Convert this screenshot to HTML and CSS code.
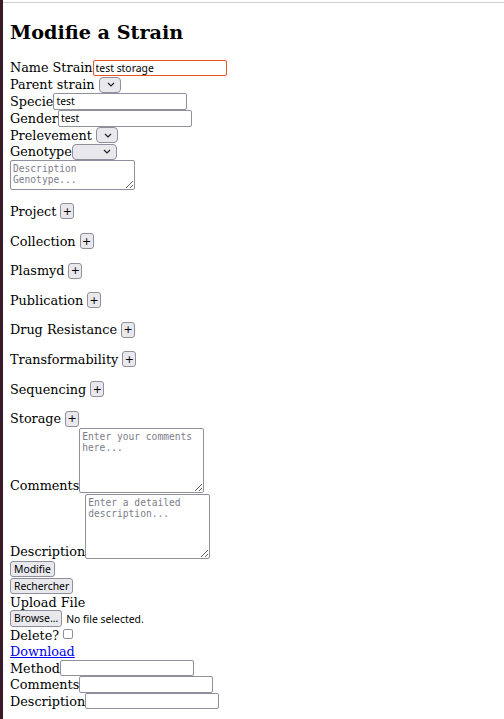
FILE: index.html
```html
<!DOCTYPE html>
<html lang="en">
<head>
<meta charset="utf-8">
<title>Modifie a Strain</title>
<link rel="stylesheet" href="styles.css">
</head>
<body>
<div class="page">
  <h2 class="title">Modifie a Strain</h2>
  <form class="strain-form">
    <div class="row"><label>Name Strain</label><input type="text" class="field is-focused" value="test storage"></div>
    <div class="row"><label>Parent strain</label><select class="select spaced"></select></div>
    <div class="row"><label>Specie</label><input type="text" class="field" value="test"></div>
    <div class="row"><label>Gender</label><input type="text" class="field" value="test"></div>
    <div class="row"><label>Prelevement</label><select class="select spaced"></select></div>
    <div class="row"><label>Genotype</label><select class="select select-wide"></select></div>
    <textarea class="area area-small" placeholder="Description Genotype..."></textarea>

    <p class="section">Project <button type="button" class="add">+</button></p>
    <p class="section">Collection <button type="button" class="add">+</button></p>
    <p class="section">Plasmyd <button type="button" class="add">+</button></p>
    <p class="section">Publication <button type="button" class="add">+</button></p>
    <p class="section">Drug Resistance <button type="button" class="add">+</button></p>
    <p class="section">Transformability <button type="button" class="add">+</button></p>
    <p class="section">Sequencing <button type="button" class="add">+</button></p>
    <p class="section">Storage <button type="button" class="add">+</button></p>

    <div class="area-row"><label>Comments</label><textarea class="area" placeholder="Enter your comments here..."></textarea></div>
    <div class="area-row"><label>Description</label><textarea class="area" placeholder="Enter a detailed description..."></textarea></div>

    <div class="actions">
      <div class="row row-tight"><button type="button" class="btn">Modifie</button></div>
      <div class="row row-tight"><button type="button" class="btn">Rechercher</button></div>
      <div class="row row-tight"><label>Upload File</label></div>
      <div class="row row-tight"><span class="btn btn-file">Browse…</span><span class="file-name">No file selected.</span></div>
      <div class="row row-tight"><label>Delete?</label><input type="checkbox" class="check"></div>
      <div class="row row-tight"><a href="#" class="link">Download</a></div>
      <div class="row row-tight"><label>Method</label><input type="text" class="field"></div>
      <div class="row row-tight"><label>Comments</label><input type="text" class="field"></div>
      <div class="row row-tight"><label>Description</label><input type="text" class="field"></div>
    </div>
  </form>
</div>
</body>
</html>
```

FILE: styles.css
```css
html, body {
  margin: 0;
  padding: 0;
  background: #ffffff;
}

body {
  border-left: 3px solid #3b1b27;
  min-height: 719px;
  box-sizing: border-box;
  padding-top: 2px;
  font-family: "DejaVu Serif", serif;
  font-size: 12.8px;
  color: #000;
}

.page {
  border-top: 1px solid #cfcfcf;
  padding: 0 7px 7px 7px;
  display: flow-root;
}

.title {
  font-size: 19.2px;
  font-weight: bold;
  margin: 18px 0 15.5px 0;
}

.strain-form {
  line-height: normal;
}

.row {
  display: flex;
  align-items: center;
  height: 16.8px;
  white-space: nowrap;
}

.row-tight {
  height: 16.5px;
}

.field {
  font-family: "Noto Sans", "DejaVu Sans", sans-serif;
  font-size: 10.4px;
  width: 134px;
  height: 16.5px;
  box-sizing: border-box;
  border: 1px solid #8f8f9d;
  border-radius: 2px;
  padding: 0 2px;
  margin: 0;
  background: #fff;
  color: #000;
  outline: none;
}

.field.is-focused {
  border-color: #e95420;
}

.select {
  appearance: none;
  -webkit-appearance: none;
  width: 22px;
  height: 16px;
  box-sizing: border-box;
  border: 1px solid #8f8f9d;
  border-radius: 4px;
  margin: 0;
  background-color: #e9e9ed;
  background-image: url("data:image/svg+xml,%3Csvg xmlns='http://www.w3.org/2000/svg' width='8' height='5' viewBox='0 0 8 5'%3E%3Cpath d='M1 1l3 3 3-3' fill='none' stroke='%23222' stroke-width='1.2'/%3E%3C/svg%3E");
  background-repeat: no-repeat;
  background-position: right 5px center;
}

.spaced {
  margin-left: 4px;
}

.select-wide {
  width: 45px;
}

.area {
  font-family: "DejaVu Sans Mono", monospace;
  font-size: 9.6px;
  width: 125px;
  height: 65px;
  box-sizing: border-box;
  border: 1px solid #8f8f9d;
  border-radius: 2px;
  padding: 2px 2px 1px 2px;
  margin: 0;
  resize: both;
  color: #000;
}

.area::placeholder {
  color: #7c7c8a;
}

.area-small {
  height: 30px;
  display: block;
}

.section {
  display: flex;
  align-items: center;
  gap: 4px;
  margin: 12.8px 0;
  height: 16.8px;
}

.add {
  font-family: "DejaVu Sans", sans-serif;
  font-size: 11px;
  width: 14px;
  height: 16px;
  padding: 0;
  margin: 0;
  border: 1px solid #8f8f9d;
  border-radius: 3px;
  background: #e9e9ed;
  color: #000;
  line-height: 1;
}

.area-row {
  display: flex;
  align-items: flex-end;
  margin-top: -11.6px;
}

.area-row + .area-row {
  margin-top: 1px;
}

.actions {
  margin-top: 1.75px;
}

.btn {
  display: inline-block;
  font-family: "Noto Sans", "DejaVu Sans", sans-serif;
  font-size: 10.4px;
  line-height: 14px;
  height: 16px;
  box-sizing: border-box;
  padding: 0 3px;
  margin: 0;
  border: 1px solid #8f8f9d;
  border-radius: 3px;
  background: #e9e9ed;
  color: #000;
}

.btn-file {
  height: 17px;
  line-height: 15px;
  margin-right: 4px;
}

.file-name {
  font-family: "Noto Sans", "DejaVu Sans", sans-serif;
  font-size: 10.4px;
}

.check {
  appearance: none;
  -webkit-appearance: none;
  width: 10px;
  height: 10px;
  box-sizing: border-box;
  border: 1px solid #8f8f9d;
  border-radius: 2px;
  margin: 0 0 4.25px 4px;
  align-self: flex-end;
  background: #fff;
}

.link {
  color: #0000ee;
  text-decoration: underline;
}
```
